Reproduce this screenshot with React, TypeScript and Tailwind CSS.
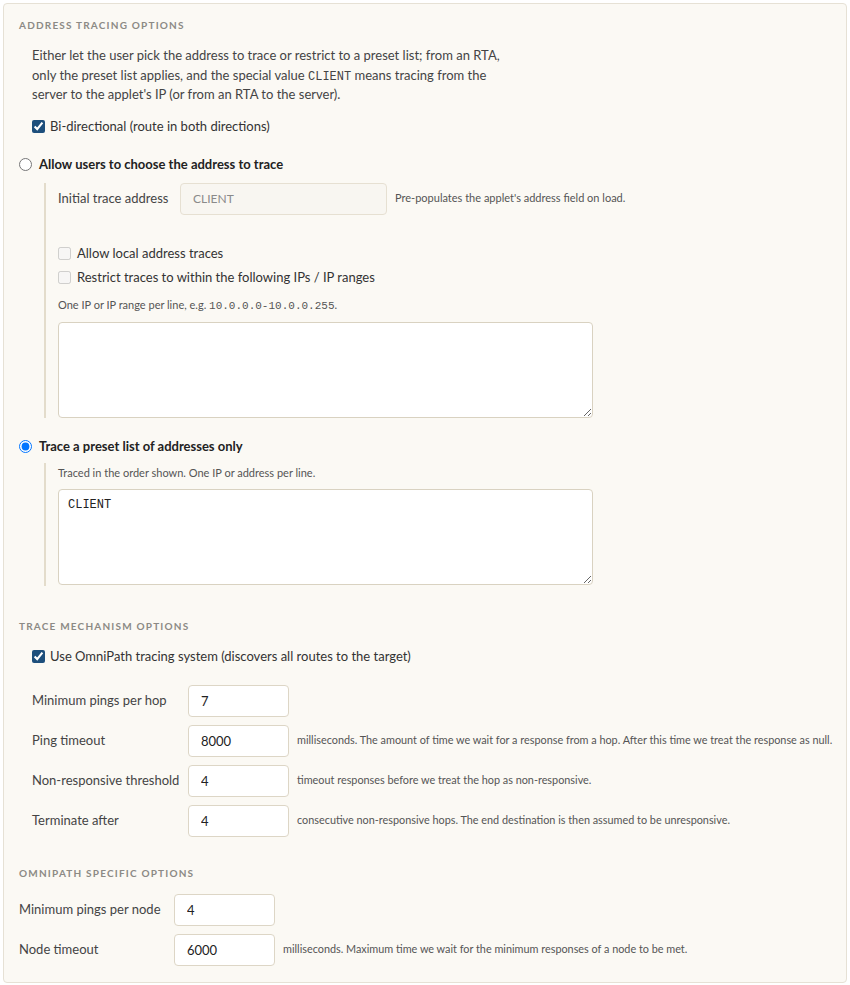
import React from 'react';

const font = { fontFamily: 'Lato, "Noto Sans", sans-serif' };

const SectionTitle: React.FC<{ children: React.ReactNode }> = ({ children }) => (
    <h3 className="text-[10px] font-bold uppercase tracking-[0.12em] text-[#8c8a85] leading-[10px]">{children}</h3>
);

const NumberRow: React.FC<{ label: string; value: string; help?: string; labelWidth: string }> = ({ label, value, help, labelWidth }) => (
    <div className="flex items-center h-8">
        <label className={`${labelWidth} shrink-0 whitespace-nowrap text-[13px] text-[#444]`}>{label}</label>
        <input
            defaultValue={value}
            className="w-[101px] h-8 shrink-0 rounded border border-[#ddd6c6] bg-white px-3 text-[13px] text-[#222] outline-none"
        />
        {help && <span className="ml-2 text-[10.85px] text-[#555] whitespace-nowrap">{help}</span>}
    </div>
);

export default function App() {
    return (
        <div style={font} className="min-h-screen bg-white p-[3px]">
            <div className="w-[844px] h-[980px] rounded border border-[#e6e1d5] bg-[#fbf9f4] px-[15px] pt-[16px]">
                <SectionTitle>Address tracing options</SectionTitle>

                <div className="pl-[13px] pt-[16px]">
                    <p className="text-[13px] leading-[19.5px] text-[#444] w-[470px]">
                        Either let the user pick the address to trace or restrict to a preset list; from an RTA,
                        only the preset list applies, and the special value <code className="font-['Liberation_Mono',monospace] text-[12px] leading-none">CLIENT</code> means tracing from the
                        server to the applet's IP (or from an RTA to the server).
                    </p>
                    <label className="mt-[12px] flex h-5 items-center gap-[5px] text-[13px] text-[#333]">
                        <input type="checkbox" defaultChecked className="m-0 h-[13px] w-[13px] accent-[#1d4f7c]" />
                        Bi-directional (route in both directions)
                    </label>
                </div>

                {/* user-chosen address */}
                <label className="mt-[18px] flex h-5 items-center gap-[7px] text-[13px] font-bold text-[#222]">
                    <input type="radio" name="mode" className="m-0 h-[13px] w-[13px]" />
                    Allow users to choose the address to trace
                </label>
                <div className="ml-[25px] mt-[8px] border-l-2 border-[#e3dccb] pl-[12px] h-[235px]">
                    <div className="flex items-center">
                        <span className="w-[122px] shrink-0 text-[13px] text-[#444]">Initial trace address</span>
                        <input
                            disabled
                            defaultValue="CLIENT"
                            className="w-[207px] h-8 shrink-0 rounded border border-[#e6e0d2] bg-[#f8f6f1] px-3 text-[12px] text-[#8a8a8a]"
                        />
                        <span className="ml-2 text-[11px] text-[#555]">Pre-populates the applet's address field on load.</span>
                    </div>
                    <label className="mt-[29px] flex h-5 items-center gap-[6px] text-[13px] text-[#333]">
                        <input type="checkbox" disabled className="m-0 h-[13px] w-[13px]" />
                        Allow local address traces
                    </label>
                    <label className="mt-[4px] flex h-5 items-center gap-[6px] text-[13px] text-[#333]">
                        <input type="checkbox" disabled className="m-0 h-[13px] w-[13px]" />
                        Restrict traces to within the following IPs / IP ranges
                    </label>
                    <p className="mt-[9px] h-4 text-[11px] leading-4 text-[#555]">
                        One IP or IP range per line, e.g. <code className="font-['Liberation_Mono',monospace] text-[11px]">10.0.0.0-10.0.0.255</code>.
                    </p>
                    <textarea className="mt-[9px] block w-[535px] h-[96px] rounded border border-[#d9d2c1] bg-white p-2 text-[12px]" />
                </div>

                {/* preset list */}
                <label className="mt-[19px] flex h-5 items-center gap-[7px] text-[13px] font-bold text-[#222]">
                    <input type="radio" name="mode" defaultChecked className="m-0 h-[13px] w-[13px]" />
                    Trace a preset list of addresses only
                </label>
                <div className="ml-[25px] mt-[6px] border-l-2 border-[#e3dccb] pl-[12px] h-[123px]">
                    <p className="pt-[2px] h-[18px] text-[11px] leading-4 text-[#555]">Traced in the order shown. One IP or address per line.</p>
                    <textarea
                        defaultValue="CLIENT"
                        className="mt-[8px] block w-[535px] h-[96px] rounded border border-[#d9d2c1] bg-white px-[9px] py-[6px] text-[12px] text-[#222] font-['Liberation_Mono',monospace]"
                    />
                </div>

                <div className="mt-[35px]">
                    <SectionTitle>Trace mechanism options</SectionTitle>
                </div>
                <div className="pl-[13px]">
                    <label className="mt-[16px] flex h-5 items-center gap-[5px] text-[13px] text-[#333]">
                        <input type="checkbox" defaultChecked className="m-0 h-[13px] w-[13px] accent-[#1d4f7c]" />
                        Use OmniPath tracing system (discovers all routes to the target)
                    </label>
                    <div className="mt-[18px] flex flex-col gap-2">
                        <NumberRow labelWidth="w-[156px]" label="Minimum pings per hop" value="7" />
                        <NumberRow labelWidth="w-[156px]" label="Ping timeout" value="8000" help="milliseconds. The amount of time we wait for a response from a hop. After this time we treat the response as null." />
                        <NumberRow labelWidth="w-[156px]" label="Non-responsive threshold" value="4" help="timeout responses before we treat the hop as non-responsive." />
                        <NumberRow labelWidth="w-[156px]" label="Terminate after" value="4" help="consecutive non-responsive hops. The end destination is then assumed to be unresponsive." />
                    </div>
                </div>

                <div className="mt-[31px]">
                    <SectionTitle>OmniPath specific options</SectionTitle>
                </div>
                <div className="mt-[16px] flex flex-col gap-2">
                    <NumberRow labelWidth="w-[155px]" label="Minimum pings per node" value="4" />
                    <NumberRow labelWidth="w-[155px]" label="Node timeout" value="6000" help="milliseconds. Maximum time we wait for the minimum responses of a node to be met." />
                </div>
            </div>
        </div>
    );
}
